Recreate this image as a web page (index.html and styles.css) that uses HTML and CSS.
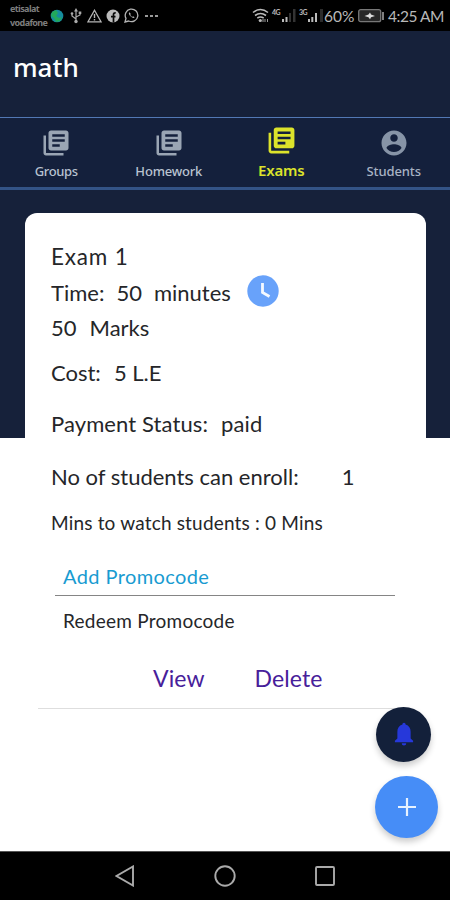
FILE: index.html
```html
<!DOCTYPE html>
<html lang="en">
<head>
<meta charset="utf-8">
<title>math</title>
<link rel="stylesheet" href="styles.css">
</head>
<body>
<svg class="defs" aria-hidden="true">
  <symbol id="library" viewBox="0 0 24 24"><path d="M4 6H2v14c0 1.100.9 2 2 2h14v-2H4V6z"/><path fill-rule="evenodd" d="M20 2H8C6.900 2 6 2.900 6 4V16C6 17.100 6.900 18 8 18H20C21.100 18 22 17.100 22 16V4C22 2.900 21.100 2 20 2ZM19 11H9V9H19ZM15 15H9V13H15ZM19 7H9V5H19Z"/></symbol>
</svg>
<div class="screen">
  <header class="status">
    <div class="carriers"><span>etisalat</span><span>vodafone</span></div>
    <svg class="globe" width="14" height="14" viewBox="0 0 14 14"><circle cx="7" cy="7" r="6.300" fill="#168c9e"/><path d="M2 3l4-2 2 3-2 3 3 2 3-1-2 4-4 1-2-4-3-2z" fill="#22a95b"/></svg>
    <svg class="usb" width="12" height="16" viewBox="0 0 12 16"><g fill="none" stroke="#aaa" stroke-width="1.200"><path d="M6 3v10M6 11L2 8V6M6 9l4-2V5"/></g><g fill="#aaa"><path d="M6 0l2 3.500H4z"/><circle cx="6" cy="13.500" r="1.700"/><circle cx="2" cy="5.500" r="1.300"/><path d="M8.700 3.500h2.600V6H8.700z"/></g></svg>
    <svg class="warn" width="15" height="14" viewBox="0 0 15 14"><path d="M7.500 1.300L14 12.800H1z" fill="none" stroke="#b5b5b5" stroke-width="1.300"/><path d="M7.500 5v4M7.500 10v1.500" stroke="#b5b5b5" stroke-width="1.400"/></svg>
    <svg class="fb" width="14" height="14" viewBox="0 0 14 14"><circle cx="7" cy="7" r="6.500" fill="#bbb"/><path d="M7.500 13.500V5.600c0-1.300.7-1.800 2.200-1.700M5 7.700h4.500" fill="none" stroke="#080808" stroke-width="1.700"/></svg>
    <svg class="wa" width="15" height="15" viewBox="0 0 15 15"><path d="M1 14l1-3.600A6.300 6.300 0 1 1 4.700 13z" fill="none" stroke="#b5b5b5" stroke-width="1.300"/><path d="M5.500 4.300c-1.500 1 0 3.200 1.300 4.300 1.500 1.300 3.200 1.800 3.800.6L9 8.200l-.9.700-1.900-2 .6-.9z" fill="#b5b5b5"/></svg>
    <svg class="dots" width="13" height="4" viewBox="0 0 13 4"><path d="M0 1h3v2H0zM5 1h3v2H5zM10 1h3v2h-3z" fill="#999"/></svg>
    <svg class="wifi" width="17" height="15" viewBox="0 0 17 15"><g fill="none" stroke="#bbb" stroke-width="1.600"><path d="M1 4.500Q8.500-1.500 16 4.500M3 7.500q5.500-4 11 0M5.300 10.200q3.200-2.300 6.400 0"/></g><circle cx="8.300" cy="12.500" r="1.600" fill="#bbb"/><path d="M11 14v-3M13 11v3M15.500 14v-3" stroke="#999"/></svg>
    <div class="cell"><span>4G</span><svg width="16" height="15" viewBox="0 0 16 15"><path d="M1 11h2v3H1zM4.500 9h2v5h-2z" fill="#bbb"/><path d="M8 5h2v9H8zM12 1h2.500v13H12z" fill="#333"/></svg></div>
    <div class="cell second"><span>3G</span><svg width="16" height="15" viewBox="0 0 16 15"><path d="M0 11h2v3H0zM3.300 9h2v5h-2zM7 5h2v9H7z" fill="#bbb"/><path d="M12 1h3v13h-3z" fill="#2b2b2b"/></svg></div>
    <span class="percent">60%</span>
    <svg class="battery" width="26" height="14" viewBox="0 0 26 14"><rect x=".7" y=".7" width="22" height="12" rx="2" fill="#282828" stroke="#777" stroke-width="1.300"/><path d="M25 3v8" stroke="#aaa" stroke-width="1.500"/><path d="M6.500 7l4-1.500L12 3.500l1 2 4 1.500-4 1.200-1 2-1.500-2z" fill="#ddd"/></svg>
    <span class="clock">4:25 AM</span>
  </header>
  <div class="title"><h1>math</h1></div>
  <nav class="tabs">
    <div class="tab"><svg width="30" height="30"><use href="#library"/></svg><span class="groups">Groups</span></div>
    <div class="tab"><svg width="30" height="30"><use href="#library"/></svg><span class="homework">Homework</span></div>
    <div class="tab active"><svg width="31" height="31"><use href="#library"/></svg><span>Exams</span></div>
    <div class="tab students"><svg width="30" height="30" viewBox="0 0 24 24"><path d="M12 2C6.480 2 2 6.480 2 12s4.480 10 10 10 10-4.480 10-10S17.520 2 12 2zm0 3c1.660 0 3 1.340 3 3s-1.340 3-3 3-3-1.340-3-3 1.340-3 3-3zm0 14.200c-2.500 0-4.710-1.280-6-3.220.030-1.990 4-3.080 6-3.080 1.990 0 5.970 1.090 6 3.080-1.290 1.940-3.500 3.220-6 3.220z"/></svg><span>Students</span></div>
  </nav>
  <main>
    <section class="card">
      <div class="row exam">Exam 1</div>
      <div class="row time"><span>Time:</span><span>50</span><span>minutes</span><svg width="32" height="32" viewBox="0 0 32 32"><circle cx="16" cy="16" r="15.700" fill="#68a2fa"/><path d="M15.500 8v9.500L22.500 21.500" fill="none" stroke="#f4f9ff" stroke-width="2.800"/></svg></div>
      <div class="row marks"><span>50</span><span>Marks</span></div>
      <div class="row cost"><span>Cost:</span><span>5 L.E</span></div>
      <div class="row payment"><span>Payment Status:</span><span>paid</span></div>
      <div class="row enroll"><span>No of students can enroll:</span><span>1</span></div>
      <div class="row mins">Mins to watch students : 0 Mins</div>
      <div class="promo">Add Promocode</div>
      <div class="redeem">Redeem Promocode</div>
      <div class="actions"><span class="view">View</span><span class="delete">Delete</span></div>
    </section>
  </main>
  <footer class="navbar">
    <svg width="20" height="22" viewBox="0 0 20 22"><path d="M18 1.500v19L1.500 11z"/></svg>
    <svg width="22" height="22" viewBox="0 0 22 22"><circle cx="11" cy="11" r="9.700"/></svg>
    <svg width="20" height="20" viewBox="0 0 20 20"><rect x="1" y="1" width="18" height="18" rx="1"/></svg>
  </footer>
  <div class="fab bell"><svg width="20" height="25" viewBox="0 0 22 26"><path d="M11 0c-1.200 0-1.700.8-1.700 2C5.500 3 3.700 6.200 3.700 10v7.500L1 20v1.500h20V20l-2.700-2.500V10c0-3.800-1.800-7-5.600-8 0-1.200-.5-2-1.700-2zM8.500 22.500a2.500 2.500 0 0 0 5 0z" fill="#2638da"/></svg></div>
  <div class="fab add"><svg width="18" height="18" viewBox="0 0 18 18"><path d="M9 0v18M0 9h18" stroke="#e7f2ff" stroke-width="2.200"/></svg></div>
</div>
</body>
</html>
```
FILE: styles.css
```css
* { box-sizing: border-box; }
body { margin: 0; font-family: Lato, "Noto Sans", sans-serif; }
.defs { position: absolute; width: 0; height: 0; }
.screen { position: relative; width: 450px; height: 900px; overflow: hidden; display: flex; flex-direction: column; background: #fff; }
svg { display: block; flex: none; }

.status { height: 31px; background: #000; display: flex; align-items: center; padding-left: 10px; color: #b8b8b8; white-space: nowrap; flex: none; }
.carriers { width: 40px; display: flex; flex-direction: column; font: bold 9px/14px "Noto Sans", sans-serif; color: #7d7d7d; padding-top: 1px; }
.carriers span:first-child { letter-spacing: -.6px; }
.carriers span:last-child { letter-spacing: -.6px; }
.usb { margin-left: 6px; }
.warn { margin-left: 5px; }
.fb { margin-left: 4px; }
.wa { margin-left: 4px; }
.dots { margin-left: 6px; }
.wifi { margin-left: 94px; }
.cell { display: flex; margin-left: 3px; width: 26px; }
.cell span { width: 9px; font-size: 7px; line-height: 8px; font-weight: bold; letter-spacing: -.5px; }
.second { margin-left: 1px; width: 25px; }
.percent { font-size: 15.500px; width: 34px; padding-top: 1px; }
.battery { margin-top: 1px; }
.clock { font-size: 15.500px; margin-left: 4px; padding-top: 1px; letter-spacing: -.45px; }

.title { height: 86px; background: #16213a; padding: 18px 13px; flex: none; }
h1 { margin: 0; color: #fff; font: 500 26px/36px "Noto Sans", sans-serif; letter-spacing: 0; }
.tabs { height: 73px; flex: none; display: grid; grid-template-columns: repeat(4, 1fr); background: #14203c; border-top: 1px solid #5278b4; border-bottom: 3px solid #335386; }
.tab { display: flex; flex-direction: column; align-items: center; padding-top: 10px; fill: #9aa5b4; color: #b9c3d1; font: 500 13px/16px "Noto Sans", sans-serif; }
.tab span { margin-top: 5px; }
.groups { letter-spacing: -.35px; }
.homework { letter-spacing: -.2px; }
.active { padding-top: 7px; fill: #dce32b; color: #dce32b; font-size: 15px; font-weight: 600; letter-spacing: -.2px; }
.active span { margin-top: 6px; }
.students { fill: #8794a7; color: #a8b3c4; letter-spacing: -.1px; }

main { height: 661px; flex: none; padding: 23px 24px 0 25px; background: linear-gradient(#16213a 248px, #fff 248px); }
.card { height: 620px; border-radius: 12px 12px 0 0; background: #fff; padding-top: 25px; color: #252629; }
.row { display: flex; align-items: center; padding-left: 26px; font-size: 22px; white-space: pre; }
.exam { height: 36px; font-size: 22.500px; letter-spacing: .8px; }
.time { height: 36px; gap: 12px; }
.time svg { margin: -3px 0 0 4px; }
.marks { height: 35px; gap: 13px; }
.cost { height: 54px; gap: 13px; }
.payment { height: 49px; gap: 13px; letter-spacing: .1px; }
.enroll { height: 57px; gap: 43px; }
.mins { height: 34px; font-size: 19px; letter-spacing: .18px; }
.promo { margin: 20px 31px 0 30px; height: 37px; padding-left: 8px; border-bottom: 1px solid #858585; font-size: 20px; line-height: 34px; letter-spacing: .4px; color: #189bd1; }
.redeem { height: 50px; padding-left: 38px; font-size: 19px; line-height: 50px; letter-spacing: .25px; }
.actions { height: 63px; margin: 0 26px 0 13px; padding: 2px 0 0 115px; border-bottom: 1px solid #dedede; display: flex; gap: 50px; font-size: 23px; line-height: 60px; letter-spacing: .1px; color: #47209a; }

.navbar { height: 49px; flex: none; margin-top: auto; background: #000; border-top: 1px solid #555; display: flex; align-items: center; justify-content: center; gap: 79px; fill: none; stroke: #aaa; stroke-width: 1.900; }
.fab { position: absolute; border-radius: 50%; display: flex; align-items: center; justify-content: center; box-shadow: 0 4px 6px #0003; }
.bell { left: 376px; top: 707px; width: 55px; height: 55px; background: #13203a; }
.add { left: 375px; top: 776px; width: 63px; height: 62px; background: #468df7; }
```
